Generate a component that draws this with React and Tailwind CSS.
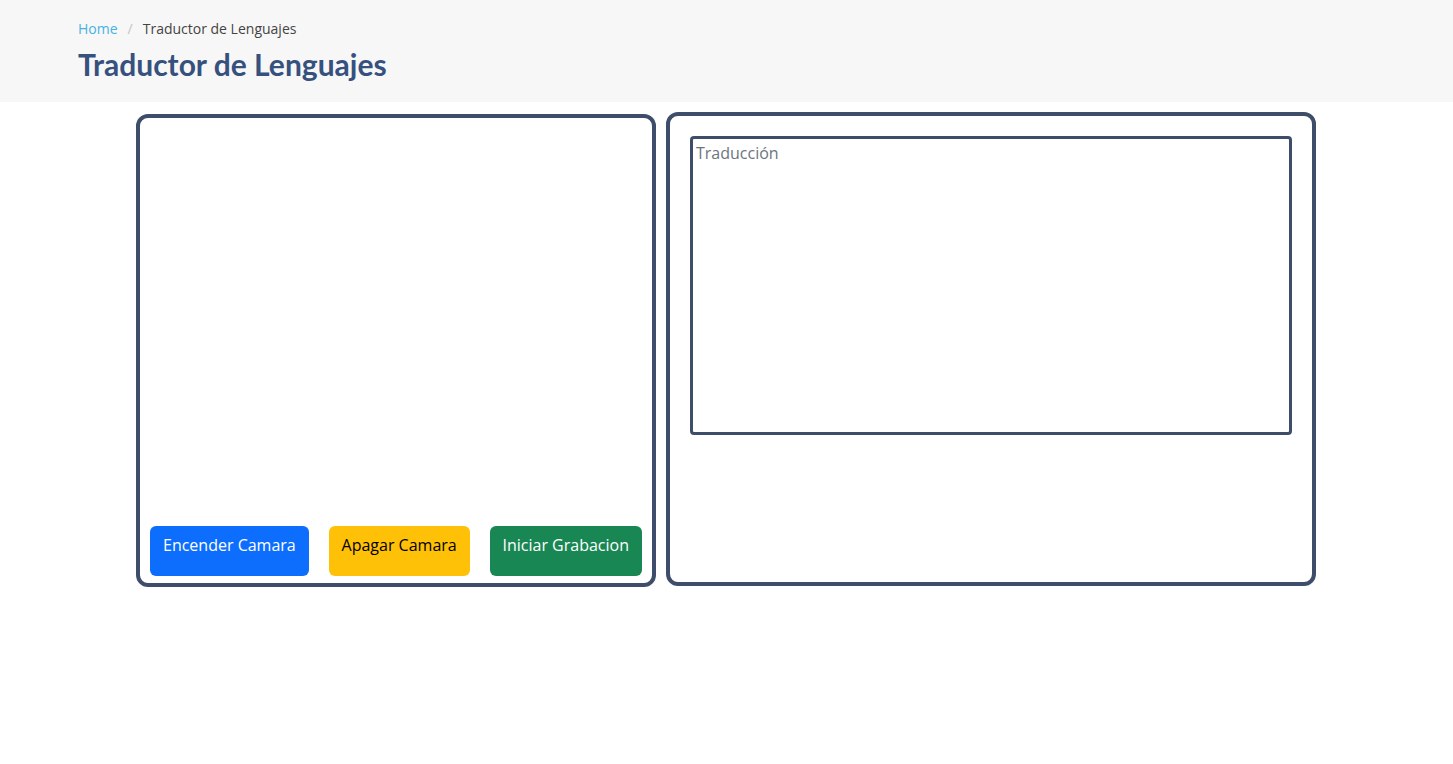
export default function App() {
  return (
    <div className="min-h-[764px] bg-white" style={{ fontFamily: '"Open Sans", sans-serif' }}>
      <div className="h-[102px] bg-[#f7f7f7] pl-[78px] pt-[19px]">
        <div className="flex items-center text-[14px] leading-[20px]">
          <span className="text-[#47b2e4]">Home</span>
          <span className="px-[10px] text-[#c4c4c4]">/</span>
          <span className="text-[#444444]">Traductor de Lenguajes</span>
        </div>
        <h2
          className="mt-[6px] text-[30px] font-bold leading-[38px] text-[#37517e]"
          style={{ fontFamily: 'Lato, sans-serif' }}
        >
          Traductor de Lenguajes
        </h2>
      </div>
      <div className="mt-[10px] flex items-start gap-[10px] pl-[136px]">
        <div className="mt-[2px] flex h-[473px] w-[520px] flex-col justify-end rounded-[12px] border-4 border-[#3e4d6a] px-[10px] pb-[7px]">
          <div className="flex justify-between">
            <button className="h-[50px] rounded-[6px] bg-[#0d6efd] px-[13px] pb-[13px] text-[16px] text-white">Encender Camara</button>
            <button className="h-[50px] rounded-[6px] bg-[#ffc107] px-[13px] pb-[13px] text-[16px] text-black">Apagar Camara</button>
            <button className="h-[50px] rounded-[6px] bg-[#198754] px-[13px] pb-[13px] text-[16px] text-white">Iniciar Grabacion</button>
          </div>
        </div>
        <div className="h-[474px] w-[650px] rounded-[12px] border-4 border-[#3e4d6a] p-[20px]">
          <textarea
            placeholder="Traducción"
            className="block h-[299px] w-full resize-none rounded-[4px] border-[3px] border-[#3e4d6a] px-[3px] py-[2px] text-[16px] leading-[24px] text-[#212529] outline-none placeholder:text-[#6c757d]"
          />
        </div>
      </div>
    </div>
  );
}
